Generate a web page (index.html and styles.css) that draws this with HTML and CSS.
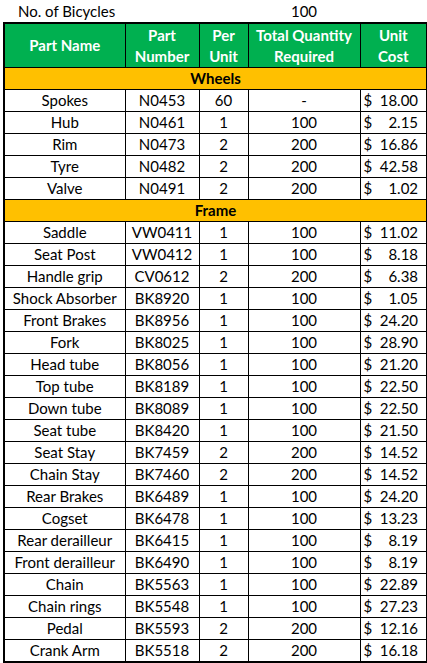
FILE: index.html
```html
<!DOCTYPE html>
<html>
<head>
<meta charset="utf-8">
<link rel="stylesheet" href="styles.css">
</head>
<body>
<table class="sheet">
  <colgroup>
    <col class="c-name"><col class="c-num"><col class="c-per"><col class="c-qty"><col class="c-cost">
  </colgroup>
  <tr class="top-row">
    <td class="bikes-label" colspan="3">No. of Bicycles</td>
    <td class="center">100</td>
    <td></td>
  </tr>
  <tbody class="grid">
  <tr class="head">
    <th>Part Name</th><th>Part<br>Number</th><th>Per<br>Unit</th><th>Total Quantity<br>Required</th><th>Unit<br>Cost</th>
  </tr>
  <tr class="section"><td colspan="5">Wheels</td></tr>
  <tr><td>Spokes</td><td>N0453</td><td>60</td><td>-</td><td class="cost"><span>$</span><span>18.00</span></td></tr>
  <tr><td>Hub</td><td>N0461</td><td>1</td><td>100</td><td class="cost"><span>$</span><span>2.15</span></td></tr>
  <tr><td>Rim</td><td>N0473</td><td>2</td><td>200</td><td class="cost"><span>$</span><span>16.86</span></td></tr>
  <tr><td>Tyre</td><td>N0482</td><td>2</td><td>200</td><td class="cost"><span>$</span><span>42.58</span></td></tr>
  <tr><td>Valve</td><td>N0491</td><td>2</td><td>200</td><td class="cost"><span>$</span><span>1.02</span></td></tr>
  <tr class="section"><td colspan="5">Frame</td></tr>
  <tr><td>Saddle</td><td>VW0411</td><td>1</td><td>100</td><td class="cost"><span>$</span><span>11.02</span></td></tr>
  <tr><td>Seat Post</td><td>VW0412</td><td>1</td><td>100</td><td class="cost"><span>$</span><span>8.18</span></td></tr>
  <tr><td>Handle grip</td><td>CV0612</td><td>2</td><td>200</td><td class="cost"><span>$</span><span>6.38</span></td></tr>
  <tr><td>Shock Absorber</td><td>BK8920</td><td>1</td><td>100</td><td class="cost"><span>$</span><span>1.05</span></td></tr>
  <tr><td>Front Brakes</td><td>BK8956</td><td>1</td><td>100</td><td class="cost"><span>$</span><span>24.20</span></td></tr>
  <tr><td>Fork</td><td>BK8025</td><td>1</td><td>100</td><td class="cost"><span>$</span><span>28.90</span></td></tr>
  <tr><td>Head tube</td><td>BK8056</td><td>1</td><td>100</td><td class="cost"><span>$</span><span>21.20</span></td></tr>
  <tr><td>Top tube</td><td>BK8189</td><td>1</td><td>100</td><td class="cost"><span>$</span><span>22.50</span></td></tr>
  <tr><td>Down tube</td><td>BK8089</td><td>1</td><td>100</td><td class="cost"><span>$</span><span>22.50</span></td></tr>
  <tr><td>Seat tube</td><td>BK8420</td><td>1</td><td>100</td><td class="cost"><span>$</span><span>21.50</span></td></tr>
  <tr><td>Seat Stay</td><td>BK7459</td><td>2</td><td>200</td><td class="cost"><span>$</span><span>14.52</span></td></tr>
  <tr><td>Chain Stay</td><td>BK7460</td><td>2</td><td>200</td><td class="cost"><span>$</span><span>14.52</span></td></tr>
  <tr><td>Rear Brakes</td><td>BK6489</td><td>1</td><td>100</td><td class="cost"><span>$</span><span>24.20</span></td></tr>
  <tr><td>Cogset</td><td>BK6478</td><td>1</td><td>100</td><td class="cost"><span>$</span><span>13.23</span></td></tr>
  <tr><td>Rear derailleur</td><td>BK6415</td><td>1</td><td>100</td><td class="cost"><span>$</span><span>8.19</span></td></tr>
  <tr><td>Front derailleur</td><td>BK6490</td><td>1</td><td>100</td><td class="cost"><span>$</span><span>8.19</span></td></tr>
  <tr><td>Chain</td><td>BK5563</td><td>1</td><td>100</td><td class="cost"><span>$</span><span>22.89</span></td></tr>
  <tr><td>Chain rings</td><td>BK5548</td><td>1</td><td>100</td><td class="cost"><span>$</span><span>27.23</span></td></tr>
  <tr><td>Pedal</td><td>BK5593</td><td>2</td><td>200</td><td class="cost"><span>$</span><span>12.16</span></td></tr>
  <tr><td>Crank Arm</td><td>BK5518</td><td>2</td><td>200</td><td class="cost"><span>$</span><span>16.18</span></td></tr>
  </tbody>
</table>
</body>
</html>
```
FILE: styles.css
```css
html, body {
  margin: 0;
  padding: 0;
  background: #ffffff;
}
body {
  padding-left: 3px;
  font-family: Lato, "Liberation Sans", sans-serif;
  font-size: 15px;
  color: #000;
}
.sheet {
  border-collapse: collapse;
  table-layout: fixed;
  width: 423px;
}
.c-name { width: 121px; }
.c-num { width: 74px; }
.c-per { width: 49px; }
.c-qty { width: 112px; }
.c-cost { width: 67px; }

.sheet td, .sheet th {
  padding: 0;
  text-align: center;
  height: 21px;
  line-height: 21px;
  white-space: nowrap;
}
.top-row td {
  height: 22px;
  line-height: 22px;
  border: none;
}
.top-row .bikes-label {
  text-align: left;
  padding-left: 14px;
}
.grid {
  border: 2px solid #000;
}
.grid td, .grid th {
  border: 1px solid #000;
}
.head th {
  background: #00b050;
  color: #fff;
  font-weight: bold;
  height: 43px;
  line-height: 21px;
}
.section td {
  background: #ffc000;
  font-weight: bold;
}
.sheet td.cost {
  text-align: left;
  padding: 0 8px 0 3px;
}
.cost span:first-child {
  float: left;
}
.cost span:last-child {
  float: right;
}
```
